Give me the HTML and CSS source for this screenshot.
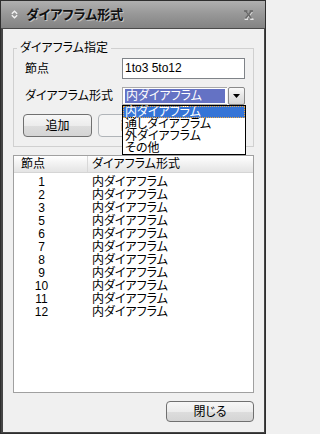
FILE: index.html
```html
<!DOCTYPE html>
<html lang="ja">
<head>
<meta charset="utf-8">
<title>ダイアフラム形式</title>
<link rel="stylesheet" href="styles.css">
</head>
<body>
<div class="window">
  <div class="titlebar">
    <svg class="tb-icon" width="7" height="9" viewBox="0 0 7 9">
      <polyline points="0.8,3.8 3.5,1.2 6.2,3.8" fill="none" stroke="#f2f2f2" stroke-width="1.4"/>
      <polyline points="0.8,5.2 3.5,7.8 6.2,5.2" fill="none" stroke="#f2f2f2" stroke-width="1.4"/>
    </svg>
    <span class="title">ダイアフラム形式</span>
    <svg class="close-x" width="10" height="10" viewBox="0 0 10 10">
      <g stroke="#e4e4e4" stroke-width="1.6" fill="none" transform="translate(0.6,0.8)">
        <line x1="1.5" y1="1" x2="7.5" y2="8.5"/>
        <line x1="7.5" y1="1" x2="1.5" y2="8.5"/>
        <line x1="0" y1="8.6" x2="3.4" y2="8.6"/>
        <line x1="5.6" y1="8.6" x2="9" y2="8.6"/>
      </g>
      <g stroke="#6a6a6a" stroke-width="1.6" fill="none">
        <line x1="1.5" y1="1" x2="7.5" y2="8.5"/>
        <line x1="7.5" y1="1" x2="1.5" y2="8.5"/>
        <line x1="0" y1="1" x2="3.4" y2="1"/>
        <line x1="5.6" y1="1" x2="9" y2="1"/>
      </g>
    </svg>
  </div>
  <div class="body">
    <fieldset class="group">
      <legend class="legend">ダイアフラム指定</legend>
      <div class="row">
        <span class="lbl">節点</span>
        <div class="input">1to3 5to12</div>
      </div>
      <div class="row row-select">
        <span class="lbl">ダイアフラム形式</span>
        <div class="select">
          <div class="select-field"><span class="sel-text">内ダイアフラム</span></div>
          <div class="select-btn">
            <svg width="7" height="4" viewBox="0 0 7 4"><polygon points="0,0 7,0 3.5,4" fill="#000"/></svg>
          </div>
          <ul class="dropdown">
            <li class="opt opt-active">内ダイアフラム</li>
            <li class="opt">通しダイアフラム</li>
            <li class="opt">外ダイアフラム</li>
            <li class="opt">その他</li>
          </ul>
        </div>
      </div>
      <div class="buttons">
        <button class="btn">追加</button>
        <button class="btn btn-disabled">削除</button>
      </div>
    </fieldset>
    <div class="list">
      <div class="list-head">
        <div class="head-num">節点</div>
        <div class="head-type">ダイアフラム形式</div>
      </div>
      <div class="list-body">
        <div class="lrow"><span class="cnum">1</span><span class="ctype">内ダイアフラム</span></div>
        <div class="lrow"><span class="cnum">2</span><span class="ctype">内ダイアフラム</span></div>
        <div class="lrow"><span class="cnum">3</span><span class="ctype">内ダイアフラム</span></div>
        <div class="lrow"><span class="cnum">5</span><span class="ctype">内ダイアフラム</span></div>
        <div class="lrow"><span class="cnum">6</span><span class="ctype">内ダイアフラム</span></div>
        <div class="lrow"><span class="cnum">7</span><span class="ctype">内ダイアフラム</span></div>
        <div class="lrow"><span class="cnum">8</span><span class="ctype">内ダイアフラム</span></div>
        <div class="lrow"><span class="cnum">9</span><span class="ctype">内ダイアフラム</span></div>
        <div class="lrow"><span class="cnum">10</span><span class="ctype">内ダイアフラム</span></div>
        <div class="lrow"><span class="cnum">11</span><span class="ctype">内ダイアフラム</span></div>
        <div class="lrow"><span class="cnum">12</span><span class="ctype">内ダイアフラム</span></div>
      </div>
    </div>
    <div class="footer">
      <button class="btn btn-close">閉じる</button>
    </div>
  </div>
</div>
</body>
</html>
```

FILE: styles.css
```css
html, body {
  margin: 0;
  padding: 0;
  background: #f0f0f0;
}

.window {
  width: 266px;
  height: 434px;
  box-sizing: border-box;
  border: 1px solid #2e2e2e;
  display: flex;
  flex-direction: column;
  background: #f0f0f0;
  font-family: "Liberation Sans", "Noto Sans CJK JP", sans-serif;
  font-size: 12px;
  font-feature-settings: "palt";
  color: #000;
  overflow: hidden;
}

.titlebar {
  height: 27px;
  flex: none;
  border-bottom: 1px solid #4a4a4a;
  background: linear-gradient(#b0b0b0, #999999 45%, #838383);
  display: flex;
  align-items: center;
  padding: 0 11px 0 10px;
}

.tb-icon {
  flex: none;
}

.title {
  margin-left: 8px;
  font-weight: bold;
  font-size: 13px;
  line-height: 16px;
  color: #111;
  text-shadow: 1px 1px 0 #c4c4c4;
}

.close-x {
  margin-left: auto;
  margin-top: 1px;
}

.body {
  flex: 1;
  display: flex;
  flex-direction: column;
  border-style: solid;
  border-color: #454545;
  border-width: 0 1px 1px 2px;
  padding: 11px 10px 10px 10px;
  min-height: 0;
}

.group {
  margin: 0;
  border: 1px solid #d0d0d0;
  padding: 2px 8px 9px 10px;
  flex: none;
}

.legend {
  padding: 0 3px;
  margin-left: -7px;
  line-height: 16px;
}

.row {
  display: flex;
  align-items: center;
  height: 21px;
}

.row-select {
  margin-top: 8px;
  height: 18px;
}

.lbl {
  width: 97px;
  padding-left: 1px;
  flex: none;
  line-height: 14px;
}

.input {
  width: 123px;
  height: 21px;
  box-sizing: border-box;
  border: 1px solid #7f8388;
  background: #fff;
  padding: 0 2px;
  line-height: 18px;
}

.select {
  position: relative;
  display: flex;
  width: 123px;
  height: 18px;
}

.select-field {
  flex: 1;
  border: 1px solid #a9a9a9;
  border-right: none;
  background: #fff;
  padding: 1px 2px 1px 2px;
  display: flex;
}

.sel-text {
  flex: 1;
  background: #6472c4;
  color: #fff;
  line-height: 14px;
  padding-left: 1px;
}

.select-btn {
  width: 17px;
  flex: none;
  margin-left: 1px;
  box-sizing: border-box;
  border: 1px solid #8a8a8a;
  border-radius: 2px;
  background: linear-gradient(#fafafa, #e6e6e6 50%, #d6d6d6);
  display: flex;
  align-items: center;
  justify-content: center;
}

.dropdown {
  position: absolute;
  top: 18px;
  left: 0;
  width: 124px;
  box-sizing: border-box;
  margin: 0;
  padding: 0;
  list-style: none;
  border: 1px solid #000;
  background: #fff;
  z-index: 5;
}

.opt {
  height: 12px;
  line-height: 12px;
  padding-left: 2px;
  white-space: nowrap;
}

.opt-active {
  background: #3574d6;
  color: #fff;
  outline: 1px dotted #e8a848;
  outline-offset: -1px;
}

.buttons {
  display: flex;
  gap: 6px;
  margin-top: 9px;
  margin-left: -1px;
}

.btn {
  font: inherit;
  font-feature-settings: "palt";
  width: 69px;
  height: 23px;
  box-sizing: border-box;
  border: 1px solid #707070;
  border-radius: 4px;
  background: linear-gradient(#f7f7f7, #ececec 50%, #dddddd 51%, #d4d4d4);
  color: #000;
  padding: 0;
  line-height: 18px;
}

.btn-disabled {
  border-color: #b0b4b8;
  background: #f4f4f4;
  color: #8a8a8a;
}

.list {
  margin-top: 8px;
  flex: 1;
  min-height: 0;
  border: 1px solid #a0a0a0;
  background: #fff;
  display: flex;
  flex-direction: column;
}

.list-head {
  display: flex;
  height: 16px;
  flex: none;
  border-bottom: 1px solid #d5d5d5;
  background: linear-gradient(#ffffff, #f1f1f1 50%, #e4e4e4);
  line-height: 16px;
}

.head-num {
  width: 66px;
  padding-left: 7px;
  border-right: 1px solid #d8d8d8;
}

.head-type {
  padding-left: 4px;
}

.list-body {
  padding-top: 3px;
}

.lrow {
  display: flex;
  height: 13px;
  line-height: 13px;
}

.cnum {
  width: 55px;
  text-align: center;
}

.ctype {
  padding-left: 23px;
}

.footer {
  margin-top: 8px;
  display: flex;
  justify-content: flex-end;
  flex: none;
}

.btn-close {
  width: 88px;
  height: 21px;
}
```
